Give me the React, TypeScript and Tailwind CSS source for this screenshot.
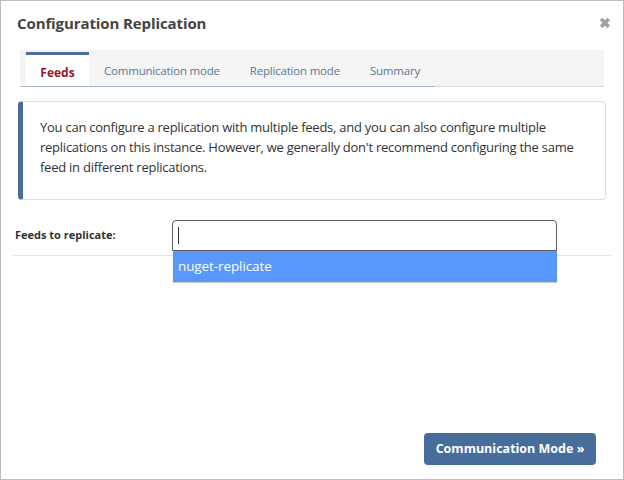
import React from "react";

const tabs = ["Communication mode", "Replication mode", "Summary"];

export default function App() {
  return (
    <div className="w-[624px] h-[480px] bg-white border border-[#bdbdbd] flex flex-col font-['Open_Sans',sans-serif] text-[#333]">
      {/* Header */}
      <div className="flex items-center justify-between pl-[16px] pr-[12px] pt-[4px] h-[40px]">
        <h2 className="text-[15px] font-bold text-[#444] tracking-[-0.1px]">Configuration Replication</h2>
        <span className="text-[#a0a0a0] text-[14px] font-bold leading-none">✖</span>
      </div>

      {/* Tabs */}
      <div className="mx-[19px] mt-[9px] h-[37px] bg-[#f5f5f5] flex items-end border-b border-[#d6dde5]">
        <div className="flex items-end border-b border-[#a9b8c9] -mb-px">
          <div className="h-[34px] ml-[6px] w-[63px] bg-white border-t-[3px] border-[#4a6e98] flex items-center justify-center text-[12px] font-bold text-[#9b1530] pt-[4px]">
            Feeds
          </div>
          <div className="flex items-center h-[34px] text-[11.5px] tracking-[-0.2px] text-[#5c7593] pt-[3px]">
            {tabs.map((t) => (
              <span key={t} className="px-[15px]">{t}</span>
            ))}
          </div>
        </div>
      </div>

      {/* Info */}
      <div className="mx-[17px] mt-[14px] h-[99px] rounded-[4px] border border-[#d9e1ea] border-l-[5px] border-l-[#4a6e98] px-[17px] py-[15px] text-[13px] leading-[20px] text-[#333] tracking-[-0.25px]">
        You can configure a replication with multiple feeds, and you can also configure multiple replications on this instance. However, we generally don't recommend configuring the same feed in different replications.
      </div>

      {/* Form row */}
      <div className="mx-[12px] mt-[20px] pb-[4px] border-b border-[#e5e5e5] flex items-center">
        <label className="w-[159px] pl-[2px] text-[11px] font-bold text-[#333]">Feeds to replicate:</label>
        <div className="relative w-[385px]">
          <div className="h-[31px] border border-[#5c5c5c] rounded-t-[4px] flex items-center pl-[5px]">
            <span className="w-px h-[17px] bg-[#333]" />
          </div>
          <div className="absolute left-[1px] right-0 top-full h-[31px] bg-[#5897fb] text-white text-[13.5px] tracking-[-0.1px] flex items-center pl-[5px] shadow-[0_1px_1px_rgba(0,0,0,0.2)]">
            nuget-replicate
          </div>
        </div>
      </div>

      <div className="flex-1" />

      {/* Footer */}
      <div className="flex justify-end pr-[27px] pb-[14px]">
        <button className="h-[32px] w-[172px] rounded-[4px] bg-[#476e9b] text-white text-[12.5px] font-bold">
          Communication Mode »
        </button>
      </div>
    </div>
  );
}
